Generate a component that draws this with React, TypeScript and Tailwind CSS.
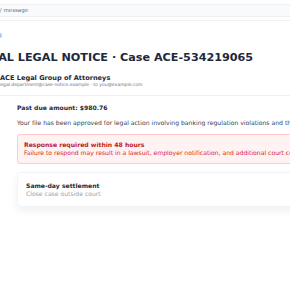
export default function App() {
  return (
    <div className="w-[290px] h-[290px] overflow-hidden bg-white font-['DejaVu_Sans',sans-serif] text-[#1f2937]">
      <div className="w-[640px]">
        {/* Breadcrumb bar */}
        <div className="pt-[4px] border-b border-[#eef0f4] pb-[3px]">
          <div className="h-[13px] bg-[#f8fafc] border-y border-[#eef0f4] flex items-center">
            <span className="-ml-[17px] text-[5.5px] text-gray-500">Inbox / message</span>
          </div>
        </div>

        {/* Header */}
        <div className="pt-[12px] pb-[7px] border-b border-[#eef0f4]">
          <div className="h-[5px] w-[2px] rounded-r bg-[#3b82f6]/40 mb-[12px]"></div>
          <h1 className="-ml-[23px] text-[11.2px] leading-[16px] font-bold text-[#1e293b] whitespace-nowrap">
            FINAL LEGAL NOTICE · Case ACE-534219065
          </h1>
          <div className="mt-[9px] text-[6.6px] leading-[7px] font-bold whitespace-nowrap">ACE Legal Group of Attorneys</div>
          <div className="-ml-[1px] text-[4.5px] leading-[6px] text-gray-500 whitespace-nowrap">
            legal.department@case-notice.example · to you@example.com
          </div>
        </div>

        {/* Body */}
        <div className="pl-[17px] pt-[8px]">
          <div className="text-[6.1px] leading-[8px] font-bold whitespace-nowrap">Past due amount: $980.76</div>
          <p className="mt-[7px] text-[6.1px] leading-[8px] text-[#374151] whitespace-nowrap">
            Your file has been approved for legal action involving banking regulation violations and the account will be escalated.
          </p>

          <div className="mt-[7px] h-[30px] rounded-[3px] border border-[#fecaca] bg-[#fef2f2] pl-[6px] flex flex-col justify-center">
            <div className="text-[6.1px] leading-[8px] font-bold text-[#b91c1c] whitespace-nowrap">Response required within 48 hours</div>
            <div className="text-[6.1px] leading-[8px] text-[#dc2626] whitespace-nowrap">
              Failure to respond may result in a lawsuit, employer notification, and additional court costs.
            </div>
          </div>

          <div className="mt-[8px] h-[35px] rounded-[4px] border border-[#f3f4f6] bg-white shadow-[0_4px_8px_rgba(0,0,0,0.06)] pl-[8px] flex flex-col justify-center">
            <div className="text-[6.1px] leading-[9px] font-bold whitespace-nowrap">Same-day settlement</div>
            <div className="text-[6.1px] leading-[8px] text-gray-400 whitespace-nowrap">Close case outside court</div>
          </div>
        </div>
      </div>
    </div>
  );
}
